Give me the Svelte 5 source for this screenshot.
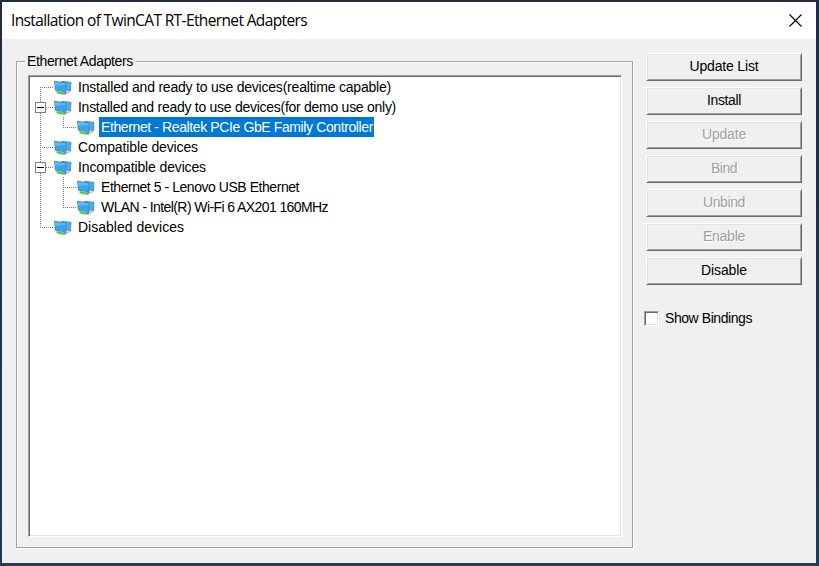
<script>
  const devices = [
    { label: 'Installed and ready to use devices(realtime capable)', w: 312 },
    {
      label: 'Installed and ready to use devices(for demo use only)', w: 317,
      children: [{ label: 'Ethernet - Realtek PCIe GbE Family Controller', w: 271, selected: true }]
    },
    { label: 'Compatible devices', w: 119 },
    {
      label: 'Incompatible devices', w: 127,
      children: [
        { label: 'Ethernet 5 - Lenovo USB Ethernet', w: 197 },
        { label: 'WLAN - Intel(R) Wi-Fi 6 AX201 160MHz', w: 226 }
      ]
    },
    { label: 'Disabled devices', w: 105 }
  ];

  const actions = [
    { label: 'Update List', w: 68 },
    { label: 'Install', w: 33 },
    { label: 'Update', w: 43, disabled: true },
    { label: 'Bind', w: 25, disabled: true },
    { label: 'Unbind', w: 41, disabled: true },
    { label: 'Enable', w: 41, disabled: true },
    { label: 'Disable', w: 45 }
  ];

  // Tracks a label so that it fills the given advance width.
  function fit(node, width) {
    const natural = node.getBoundingClientRect().width;
    const gaps = node.textContent.length;
    node.style.letterSpacing = `${(width + 1 - natural) / gaps}px`;
  }
</script>

{#snippet adapterIcon()}
  <svg class="icon" width="18" height="16" viewBox="0 0 18 16" aria-hidden="true">
    <path d="M9 13 16.5 10.5 16.5 12 11 15 7 15Z" fill="#c3c5c6" />
    <path d="M8.8 12.4 12.4 12 12 13.6 9.6 14.4Z" fill="#7b8185" />
    <path d="M2.4 11 8.8 12 9.2 13.4 7 14.5 2.6 13.2Z" fill="#4fce4c" />
    <path d="M7.4.8 17.4 2 17 11 12 10.4 8.2 8Z" fill="#5b8db3" />
    <path d="M8 1.4 16.6 2.7 16.3 10 9 8.8Z" fill="#46aff3" />
    <path d="M0 .8 12.6 2.6 12.4 12.6 1 10.6Z" fill="#4f83aa" />
    <path d="M.8 1.7 11.7 3.4 11.5 11.7 1.7 9.8Z" fill="#36a6f4" />
    <path d="M.8 1.7 11.7 3.4 11.6 4.8 1.2 6Z" fill="#5dbbf9" />
  </svg>
{/snippet}

<div class="desktop">
  <main class="window">
    <header>
      <h1><span use:fit={295}>Installation of TwinCAT RT-Ethernet Adapters</span></h1>
      <svg class="close" width="13" height="13" viewBox="0 0 13 13" role="img" aria-label="Close">
        <path d="M.5.5l12 12M12.5.5l-12 12" stroke="#000" stroke-width="1.1" />
      </svg>
    </header>
    <div class="body">
      <section class="group">
        <div class="legend"><span use:fit={105}>Ethernet Adapters</span></div>
        <ul class="tree">
          {#each devices as device}
            <li class="branch">
              <div class="row">
                <span class="stem">{#if device.children}<i class="toggle"></i>{/if}</span>
                {@render adapterIcon()}
                <span class="label"><span use:fit={device.w}>{device.label}</span></span>
              </div>
              {#if device.children}
                <ul class="children">
                  {#each device.children as child}
                    <li class="leaf">
                      <span class="stem"></span>
                      {@render adapterIcon()}
                      <span class="label" class:selected={child.selected}><span use:fit={child.w}>{child.label}</span></span>
                    </li>
                  {/each}
                </ul>
              {/if}
            </li>
          {/each}
        </ul>
      </section>
      <aside>
        {#each actions as action}
          <button disabled={action.disabled}><span use:fit={action.w}>{action.label}</span></button>
        {/each}
        <label class="check"><i class="box"></i><span use:fit={86}>Show Bindings</span></label>
      </aside>
    </div>
  </main>
</div>

<style>
  .desktop {
    box-sizing: border-box;
    width: 819px;
    height: 566px;
    padding: 2px 3px 3px 2px;
    background: linear-gradient(#1f2a44, #263a56);
    font: 14px/20px "Liberation Sans", Arial, sans-serif;
    color: #000;
  }
  .window {
    display: flex;
    flex-direction: column;
    height: 561px;
    background: #f0f0f0;
  }
  header {
    display: flex;
    align-items: center;
    justify-content: space-between;
    height: 37px;
    padding: 0 14px 0 9px;
    background: #fff;
  }
  h1 {
    margin: -1px 0 0;
    font: 15.5px/20px "Open Sans", "Noto Sans", sans-serif;
    white-space: nowrap;
  }
  .close { margin-top: -1px; }
  .body {
    display: flex;
    padding: 22px 14px 0 14px;
  }
  .group {
    box-sizing: border-box;
    width: 617px;
    height: 487px;
    border: 1px solid #a0a0a0;
    box-shadow: 1px 1px 0 #fff, inset 1px 1px 0 #fff;
    padding: 0 10px 0 11px;
  }
  .legend {
    display: flex;
    width: max-content;
    height: 20px;
    margin: -11px 0 4px -3px;
    padding: 0 2px;
    background: #f0f0f0;
    white-space: nowrap;
  }
  ul { list-style: none; margin: 0; padding: 0; }
  .tree {
    box-sizing: border-box;
    width: 594px;
    height: 462px;
    border: 1px solid;
    border-color: #a0a0a0 #fff #fff #a0a0a0;
    box-shadow: inset 1px 1px 0 #696969, inset -1px -1px 0 #e3e3e3;
    background: #fff;
    padding: 1px 0 0 11px;
  }
  .branch {
    background: repeating-linear-gradient(#808080 0 1px, transparent 1px 2px) 0 0 / 1px 100% no-repeat;
  }
  .branch:first-child { background-position: 0 10px; }
  .branch:last-child { background-size: 1px 10px; }
  .row, .leaf { display: flex; align-items: center; height: 20px; }
  .stem {
    display: flex;
    align-items: center;
    width: 14px;
    height: 20px;
    background: repeating-linear-gradient(90deg, #808080 0 1px, transparent 1px 2px) 0 10px / 13px 1px no-repeat;
  }
  .toggle {
    flex: none;
    box-sizing: border-box;
    width: 11px;
    height: 11px;
    margin: 1px 0 0 -5px;
    border: 1px solid #808080;
    background: linear-gradient(#000, #000) center / 7px 1px no-repeat #fff;
  }
  .icon { flex: none; margin-top: 2px; }
  .label { margin-left: 4px; padding: 0 0 0 2px; height: 20px; white-space: nowrap; }
  .selected { background: #0078d7; color: #fff; padding-right: 1px; }
  .children { padding-left: 23px; }
  .leaf {
    background: repeating-linear-gradient(#808080 0 1px, transparent 1px 2px) 0 0 / 1px 100% no-repeat;
  }
  .leaf:last-child { background-size: 1px 10px; }
  aside {
    display: flex;
    flex-direction: column;
    align-items: flex-start;
    gap: 6px;
    margin: -8px 0 0 13px;
  }
  button {
    box-sizing: border-box;
    width: 156px;
    height: 28px;
    border: 1px solid;
    border-color: #fff #696969 #696969 #fff;
    border-radius: 0;
    box-shadow: inset 1px 1px 0 #e3e3e3, inset -1px -1px 0 #a0a0a0;
    background: #f0f0f0;
    padding: 0 0 2px;
    font: inherit;
    line-height: 20px;
    color: #000;
    white-space: nowrap;
  }
  button:disabled { color: #a0a0a0; text-shadow: 1px 1px 0 #fff; }
  .check {
    display: flex;
    align-items: center;
    height: 19px;
    margin: 18px 0 0 -2px;
    line-height: 19px;
    white-space: nowrap;
  }
  .check span { padding-bottom: 1px; }
  .box {
    box-sizing: border-box;
    width: 15px;
    height: 15px;
    margin-right: 6px;
    border: 1px solid;
    border-color: #a0a0a0 #fff #fff #a0a0a0;
    box-shadow: inset 1px 1px 0 #696969, inset -1px -1px 0 #e3e3e3;
    background: #fff;
  }
</style>
